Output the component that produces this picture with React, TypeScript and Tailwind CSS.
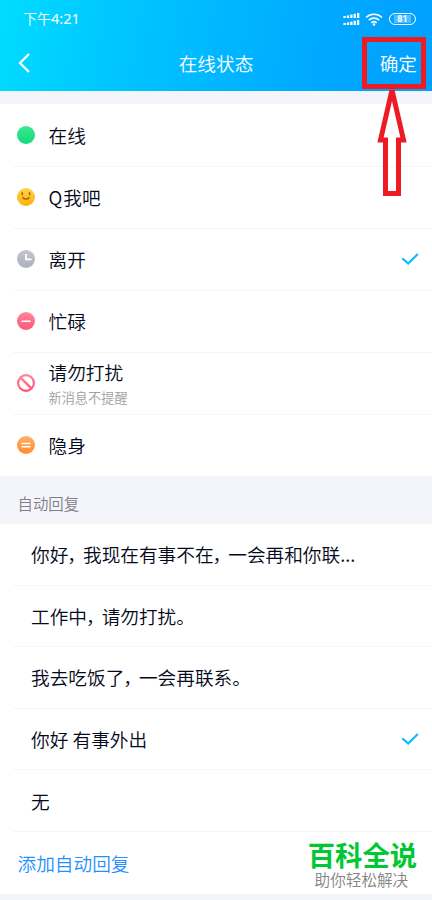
import { Fragment, type ReactNode } from "react";

const Check = () => (
  <svg className="mr-3 h-4 w-5 shrink-0" viewBox="0 0 20 16" fill="none">
    <path d="M2.3 7.4 8.2 12.6 17.8 3" stroke="#08c0ff" strokeWidth="2.2" />
  </svg>
);

const Dot = ({ id, from, to, children }: { id: string; from: string; to: string; children?: ReactNode }) => (
  <svg className="size-[18px]" viewBox="0 0 18 18" fill="none">
    <defs>
      <linearGradient id={id} x1="0" y1="0" x2="0" y2="1">
        <stop stopColor={from} />
        <stop offset="1" stopColor={to} />
      </linearGradient>
    </defs>
    <circle cx="9" cy="9" r="9" fill={`url(#${id})`} />
    {children}
  </svg>
);

const statuses: { label: ReactNode; icon: ReactNode; note?: string; checked?: boolean }[] = [
  { label: "在线", icon: <Dot id="online" from="#3be88d" to="#14d97b" /> },
  {
    label: <><span className="mr-px">Q</span>我吧</>,
    icon: (
      <Dot id="smile" from="#ffd348" to="#fdb20c">
        <path d="M5.3 4.8v2M12.6 4.8v2M6 9.6c1 2 5 2 6 0" stroke="#a8600c" strokeWidth="1.5" strokeLinecap="round" />
      </Dot>
    ),
  },
  {
    label: "离开",
    checked: true,
    icon: (
      <Dot id="away" from="#c3c5d0" to="#adb0bf">
        <path d="M9 4v5.3h5.6" stroke="#fff" strokeWidth="1.8" />
      </Dot>
    ),
  },
  {
    label: "忙碌",
    icon: (
      <Dot id="busy" from="#ff879b" to="#ff5777">
        <path d="M5 9.2h8" stroke="#fff" strokeWidth="1.5" strokeLinecap="round" />
      </Dot>
    ),
  },
  {
    label: "请勿打扰",
    note: "新消息不提醒",
    icon: (
      <svg className="size-[18px]" viewBox="0 0 18 18" fill="none">
        <defs>
          <linearGradient id="dnd" x1="0" y1="0" x2="0" y2="1">
            <stop stopColor="#ff8297" />
            <stop offset="1" stopColor="#ff5575" />
          </linearGradient>
        </defs>
        <circle cx="9" cy="9" r="7.9" stroke="url(#dnd)" strokeWidth="2.2" />
        <path d="m3.6 3.6 10.8 10.8" stroke="url(#dnd)" strokeWidth="2.2" />
      </svg>
    ),
  },
  {
    label: "隐身",
    icon: (
      <Dot id="hidden" from="#ffb066" to="#ff8b34">
        <path d="M5 7.4h8M5 10.8h8" stroke="#fff" strokeWidth="1.5" strokeLinecap="round" />
      </Dot>
    ),
  },
];

const replies: { text: string; checked?: boolean }[] = [
  { text: "你好，我现在有事不在，一会再和你联..." },
  { text: "工作中，请勿打扰。" },
  { text: "我去吃饭了，一会再联系。" },
  { text: "你好 有事外出", checked: true },
  { text: "无" },
];

// Sets full-width commas on a narrower advance
const Line = ({ text }: { text: string }) => (
  <>
    {text.split("，").map((part, i) => (
      <Fragment key={i}>
        {i > 0 && <span className="-ml-px tracking-[-3px]">，</span>}
        {part}
      </Fragment>
    ))}
  </>
);

const Signal = () => (
  <svg className="h-[14px] w-[17px]" viewBox="0 0 17 14" fill="#fff">
    {[0, 7].map((y) =>
      [2, 2.6, 3.4, 4.2, 5].map((h, i) => <rect key={`${y}-${i}`} x={0.4 + i * 3.4} y={y + 6 - h} width="2.3" height={h} />)
    )}
  </svg>
);

const Wifi = () => (
  <svg className="h-[13px] w-[18px]" viewBox="0 0 18 13" fill="none" stroke="#fff" strokeWidth="1.6">
    <path d="M1 4.5a11.5 11.5 0 0 1 16 0M3.8 7.2a7.6 7.6 0 0 1 10.4 0M6.4 9.8a4 4 0 0 1 5.2 0" />
    <circle cx="9" cy="11.5" r="1.2" fill="#fff" stroke="none" />
  </svg>
);

export default function App() {
  return (
    <div className="relative h-[900px] w-[432px] overflow-hidden bg-[#f4f5fa] font-['Noto_Sans_CJK_SC',sans-serif] text-[18.67px] font-[350] text-[#03081a]">
      <header className="h-[91px] bg-[linear-gradient(100deg,#00dcff_0%,#00c4ff_30%,#00a8ff_75%,#00a0ff_100%)] text-white">
        <div className="flex h-[38px] items-center pr-4 pl-[23px]">
          <span className="flex-1 text-[14px]">
            下午<span className="font-['Noto_Sans',sans-serif] text-[14.5px] font-normal">4:21</span>
          </span>
          <Signal />
          <span className="mr-[6px] ml-[5px] flex"><Wifi /></span>
          <span className="flex h-3 w-[27px] items-center justify-center rounded-full border border-white">
            <span className="flex h-[8px] w-[17px] items-center justify-center bg-white/30 font-['Roboto',sans-serif] text-[9px] leading-none font-bold">81</span>
          </span>
        </div>
        <div className="grid h-[50px] grid-cols-3 items-center pr-[15px] pl-[18px]">
          <svg className="h-5 w-3" viewBox="0 0 12 20" fill="none" stroke="#fff" strokeWidth="2.2">
            <path d="M11 1 2 10l9 9" />
          </svg>
          <h1 className="pr-[3px] pb-px text-center font-[350]">在线状态</h1>
          <button className="pb-px text-right font-[350]">确定</button>
        </div>
      </header>

      <ul className="mt-[13px] bg-white">
        {statuses.map((s, i) => (
          <li key={i} className="flex h-[62px] pl-[13px]">
            <div className={`flex flex-1 items-center border-t pb-px pl-1 ${i > 0 ? "border-[#f5f5f7]" : "border-white"}`}>
              {s.icon}
              <div className="ml-[13.5px] flex-1">
                <div className={s.note ? "pt-[3px] leading-[26px]" : "pb-px leading-[26px]"}>{s.label}</div>
                {s.note && <div className="text-[13.2px] leading-[26px] text-[#a0a0a0]">{s.note}</div>}
              </div>
              {s.checked && <Check />}
            </div>
          </li>
        ))}
      </ul>

      <h2 className="flex h-12 items-center pt-2 pl-[17.5px] text-[15.4px] font-[350] text-[#808084]">自动回复</h2>

      <ul className="bg-white">
        {replies.map((r) => (
          <li key={r.text} className="flex h-[61.6px] pl-[13px]">
            <div className="flex flex-1 items-center border-b border-[#f5f5f7] pl-[18px]">
              <span className="flex-1 whitespace-pre"><Line text={r.text} /></span>
              {r.checked && <Check />}
            </div>
          </li>
        ))}
        <li className="flex h-[62px] items-center justify-between pr-[15px] pl-[17.5px]">
          <span className="text-[#2490ff]">添加自动回复</span>
          <div className="flex flex-col items-center pt-1.5">
            <span className="text-[27.3px] leading-[27px] font-bold text-[#00c832]">百科全说</span>
            <span className="pr-0.5 text-[15.6px] leading-[22px] text-[#858585]">助你轻松解决</span>
          </div>
        </li>
      </ul>

      <div className="absolute top-[37px] left-[362px] h-[52px] w-16 border-5 border-[#ed1c24]" />
      <svg className="absolute top-[86px] left-[374px] h-[112px] w-9" viewBox="0 0 36 112" fill="none">
        <path d="M18 4 6.5 54H11.5v53.5h13V54H29.5Z" stroke="#ed1c24" strokeWidth="5" strokeLinejoin="miter" strokeMiterlimit="3" />
      </svg>
    </div>
  );
}
